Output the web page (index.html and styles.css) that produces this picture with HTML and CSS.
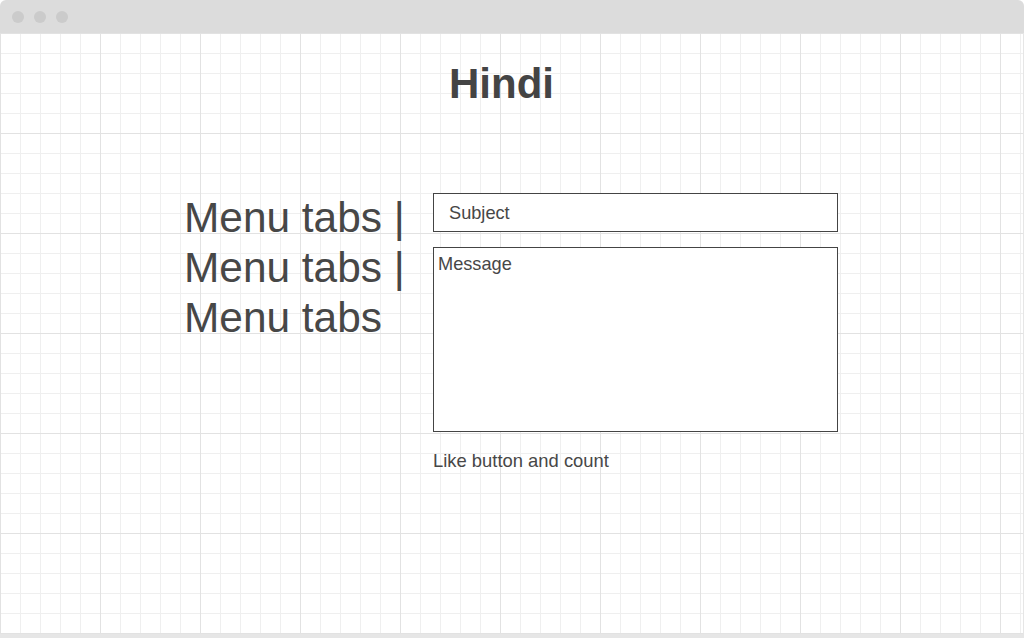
FILE: index.html
```html
<!DOCTYPE html>
<html lang="en">
<head>
    <meta charset="UTF-8">
    <meta name="viewport" content="width=device-width, initial-scale=1.0">
    <title>Hindi</title>
    <link rel="stylesheet" href="styles.css">
</head>
<body>
    <div class="window">
        <div class="titlebar">
            <span class="dot"></span>
            <span class="dot"></span>
            <span class="dot"></span>
        </div>
        <div class="canvas">
            <h1>Hindi</h1>
            <div class="content">
                <div class="menu">
                    Menu tabs |<br>
                    Menu tabs |<br>
                    Menu tabs
                </div>
                <form class="post-form" onsubmit="return false;">
                    <input type="text" class="subject" placeholder="Subject">
                    <textarea class="message" placeholder="Message"></textarea>
                    <p class="like">Like button and count</p>
                </form>
            </div>
        </div>
    </div>
</body>
</html>
```

FILE: styles.css
```css
html, body {
    margin: 0;
    padding: 0;
    background: #ffffff;
}
body {
    font-family: "Liberation Sans", Arial, sans-serif;
    color: #444;
    width: 1026px;
    height: 638px;
    overflow: hidden;
}
.window {
    width: 1024px;
    height: 634px;
    border-bottom: 4px solid #e6e6e6;
    border-radius: 6px 6px 0 0;
    overflow: hidden;
    display: flex;
    flex-direction: column;
}
.titlebar {
    height: 33px;
    background: #dcdcdc;
    display: flex;
    align-items: center;
    gap: 10px;
    padding-left: 12px;
    flex-shrink: 0;
}
.dot {
    width: 12px;
    height: 12px;
    border-radius: 50%;
    background: #cbcbcb;
}
.canvas {
    flex: 1;
    background-color: #fff;
    background-image:
        linear-gradient(to right, #e2e2e2 1px, transparent 1px),
        linear-gradient(to bottom, #e2e2e2 1px, transparent 1px),
        linear-gradient(to right, #efefef 1px, transparent 1px),
        linear-gradient(to bottom, #efefef 1px, transparent 1px);
    background-size: 100px 100px, 100px 100px, 20px 20px, 20px 20px;
    background-position: 0 0;
    border-right: 1px solid #e6e6e6;
}
h1 {
    margin: 27px 0 0 0;
    padding-right: 20px;
    text-align: center;
    font-size: 42px;
    line-height: 48px;
    font-weight: bold;
    color: #444;
}
.content {
    display: flex;
    gap: 21px;
    margin-top: 85px;
    padding-left: 184px;
}
.menu {
    width: 228px;
    white-space: nowrap;
    font-size: 42.4px;
    line-height: 50px;
    color: #474747;
}
.post-form {
    width: 405px;
    display: flex;
    flex-direction: column;
}
.subject {
    box-sizing: border-box;
    width: 405px;
    height: 39px;
    margin: 0;
    padding: 2px 15px 0 15px;
    border: 1px solid #444;
    border-radius: 0;
    background: #fff;
    font-family: inherit;
    font-size: 18.2px;
    color: #474747;
}
.message {
    box-sizing: border-box;
    width: 405px;
    height: 185px;
    margin: 15px 0 0 0;
    padding: 6px 4px;
    border: 1px solid #444;
    border-radius: 0;
    background: #fff;
    font-family: inherit;
    font-size: 18.2px;
    color: #474747;
    resize: none;
}
.subject::placeholder,
.message::placeholder {
    color: #474747;
    opacity: 1;
}
.like {
    margin: 18px 0 0 0;
    font-size: 18.4px;
    line-height: 22px;
    color: #474747;
}
```
